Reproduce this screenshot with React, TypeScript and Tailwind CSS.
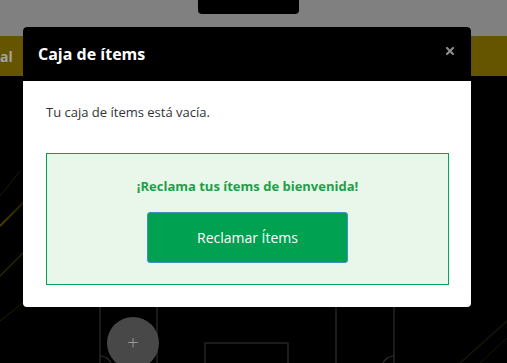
import { X } from 'lucide-react';

// Dimmed game page behind the modal
const FieldBackdrop = () => (
  <svg className="absolute inset-0" width="507" height="287" viewBox="0 0 507 287">
    <defs>
      <linearGradient id="streak" x1="0" y1="0" x2="1" y2="0">
        <stop offset="0%" stopColor="#6b5a00" stopOpacity="0.7" />
        <stop offset="100%" stopColor="#6b5a00" stopOpacity="0" />
      </linearGradient>
    </defs>
    {/* yellow light streaks on the left */}
    <path d="M0 150 L40 110" stroke="url(#streak)" strokeWidth="2" />
    <path d="M0 200 L30 170" stroke="#4a4000" strokeWidth="1.5" opacity="0.6" />
    <path d="M0 245 L25 225" stroke="#3d3500" strokeWidth="1" opacity="0.6" />
    <path d="M0 120 L20 95" stroke="#3d3500" strokeWidth="1" opacity="0.5" />
    <path d="M460 287 L507 245" stroke="#2e2a0a" strokeWidth="1.5" opacity="0.5" />
    <path d="M480 287 L507 262" stroke="#2e2a0a" strokeWidth="1" opacity="0.5" />
    {/* pitch lines */}
    <g stroke="#2e2e2e" strokeWidth="1.2" fill="none">
      <line x1="100" y1="200" x2="100" y2="287" />
      <line x1="157" y1="200" x2="157" y2="287" />
      <line x1="336" y1="200" x2="336" y2="287" />
      <line x1="394" y1="200" x2="394" y2="287" />
      <rect x="205" y="267" width="83" height="30" />
      <path d="M100 280 A12 12 0 0 1 112 292" />
      <path d="M394 280 A12 12 0 0 0 382 292" />
    </g>
  </svg>
);

export default function App() {
  return (
    <div className="relative w-[507px] h-[363px] overflow-hidden bg-black" style={{ fontFamily: '"Open Sans", "Noto Sans", sans-serif' }}>
      {/* page behind overlay (already dimmed) */}
      <div className="flex flex-col h-full">
        <div className="h-[36px] bg-[#808080] flex justify-center">
          <div className="w-[101px] h-[14px] bg-black rounded-b-[4px] -ml-[10px]" />
        </div>
        <div className="h-[40px] bg-[#665500] flex items-center">
          <span className="text-[#a3a3a3] font-bold text-[14px]">al</span>
        </div>
        <div className="relative flex-1 bg-black">
          <FieldBackdrop />
          <div className="absolute left-[107px] top-[241px] w-[52px] h-[52px] rounded-full bg-[#484848] flex items-center justify-center">
            <span className="text-[#9a9a9a] text-[20px] leading-none font-light">+</span>
          </div>
        </div>
      </div>

      {/* modal */}
      <div className="absolute left-[23px] top-[27px] w-[448px] rounded-[4px] overflow-hidden bg-white">
        <div className="h-[54px] bg-black flex items-center justify-between pl-[15px] pr-[15px]">
          <h2 className="text-white text-[16px] font-bold leading-none pb-[1px]">Caja de ítems</h2>
          <X size={12} strokeWidth={4.5} className="text-[#8a8a8a] -mt-[6px]" />
        </div>
        <div className="pt-[22px] pl-[23px] pr-[22px] pb-[22px]">
          <p className="text-[#333333] text-[13px] leading-[19px]">Tu caja de ítems está vacía.</p>
          <div className="mt-[31px] border border-[#00a651] bg-[#e9f6ea] flex flex-col items-center pt-[23px] pb-[21px]">
            <p className="text-[#1f9f49] text-[13px] font-bold leading-[19px]">¡Reclama tus ítems de bienvenida!</p>
            <button className="mt-[16px] w-[201px] h-[51px] rounded-[3px] bg-[#00a150] border border-[#3f8fc4] text-white text-[14px]">
              Reclamar Ítems
            </button>
          </div>
        </div>
      </div>
    </div>
  );
}
